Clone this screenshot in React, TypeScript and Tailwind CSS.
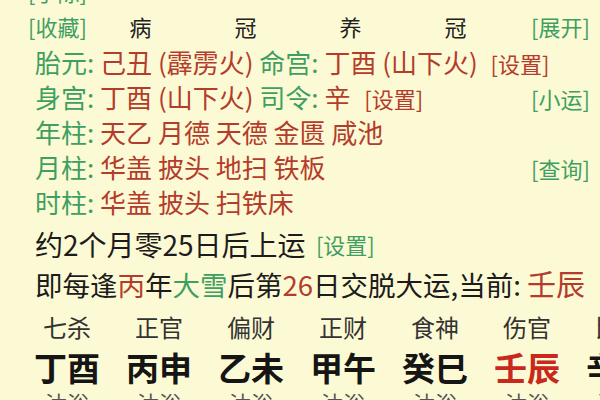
import React from "react";

const green = "text-[#3f9f62]";
const red = "text-[#b43c2c]";

function Tag({
  children,
  color = green,
  className = "",
}: {
  children: React.ReactNode;
  color?: string;
  className?: string;
}) {
  return <span className={`text-[22px] ${color} ${className}`}>[{children}]</span>;
}

function InfoRow({
  label,
  children,
  right,
}: {
  label: string;
  children: React.ReactNode;
  right?: string;
}) {
  return (
    <div className="flex h-[35px] items-center pl-[35px] pr-[10px] text-[26px] whitespace-pre">
      <span className={green}>{label}: </span>
      <span className={red}>{children}</span>
      {right && (
        <span className="ml-auto">
          <Tag>{right}</Tag>
        </span>
      )}
    </div>
  );
}

const pillars = [
  { god: "七杀", gz: "丁酉" },
  { god: "正官", gz: "丙申" },
  { god: "偏财", gz: "乙未" },
  { god: "正财", gz: "甲午" },
  { god: "食神", gz: "癸巳" },
  { god: "伤官", gz: "壬辰", current: true },
  { god: "比肩", gz: "辛卯" },
];

export default function App() {
  return (
    <div
      className="w-[600px] h-[400px] overflow-hidden bg-[#fcfad4] text-[#1c1c1c]"
      style={{ fontFamily: '"Noto Sans CJK SC", "Noto Sans", sans-serif' }}
    >
      <div className="-mt-[26px] flex h-[35px] items-center pl-[28px]">
        <Tag>手陈</Tag>
      </div>

      <div className="flex h-[35px] items-center pl-[28px] pr-[10px]">
        <Tag>收藏</Tag>
        <div className="ml-[1px] grid grid-cols-4 w-[420px] text-[22px] text-[#222] text-center">
          <span>病</span>
          <span>冠</span>
          <span>养</span>
          <span>冠</span>
        </div>
        <span className="ml-auto">
          <Tag>展开</Tag>
        </span>
      </div>

      <InfoRow label="胎元">
        己丑 (霹雳火) <span className={green}>命宫: </span>丁酉 (山下火) <Tag color={red} className="ml-[7px]">设置</Tag>
      </InfoRow>
      <InfoRow label="身宫" right="小运">
        丁酉 (山下火) <span className={green}>司令: </span>辛 <Tag color={red} className="ml-[8px]">设置</Tag>
      </InfoRow>
      <InfoRow label="年柱">天乙 月德 天德 金匮 咸池</InfoRow>
      <InfoRow label="月柱" right="查询">
        华盖 披头 地扫 铁板
      </InfoRow>
      <InfoRow label="时柱">华盖 披头 扫铁床</InfoRow>

      <div className="flex h-[50px] items-center pl-[35px] text-[28px] whitespace-pre">
        <span>约2个月零25日后上运 </span>
        <Tag className="ml-[4px]">设置</Tag>
      </div>

      <div className="flex h-[30px] items-center pl-[35px] text-[27.5px] whitespace-pre">
        <span>
          即每逢<span className={red}>丙</span>年<span className={green}>大雪</span>后第
          <span className={red}>26</span>日交脱大运,当前: <span className={`text-[29px] ${red}`}>壬辰</span>
        </span>
      </div>

      <div className="mt-[8px] grid grid-cols-[repeat(7,92px)] pl-[21px]">
        {pillars.map((p) => (
          <div key={p.gz} className="flex flex-col items-center">
            <span className="flex h-[40px] items-center leading-none text-[24px] text-[#333]">{p.god}</span>
            <span
              className={`flex h-[40px] items-center leading-none text-[33px] font-bold ${
                p.current ? "text-[#c8281e]" : "text-[#151515]"
              }`}
            >
              {p.gz}
            </span>
            <span className="flex h-[30px] items-center leading-none text-[22px] text-[#555]">沐浴</span>
          </div>
        ))}
      </div>
    </div>
  );
}
